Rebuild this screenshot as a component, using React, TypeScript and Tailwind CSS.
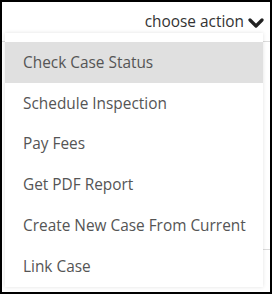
import React from 'react';

const ACTIONS = [
  'Check Case Status',
  'Schedule Inspection',
  'Pay Fees',
  'Get PDF Report',
  'Create New Case From Current',
  'Link Case',
];

const Chevron: React.FC = () => (
  <svg width="16" height="11" viewBox="0 0 16 11" className="ml-[4px] mt-[3px]">
    <polyline
      points="2,2 8,8 14,2"
      fill="none"
      stroke="#222"
      strokeWidth="3.2"
      strokeLinecap="round"
      strokeLinejoin="round"
    />
  </svg>
);

export default function App() {
  return (
    <div
      className="relative w-[272px] h-[294px] overflow-hidden border-2 border-black bg-white"
      style={{ fontFamily: '"Open Sans", "Noto Sans", sans-serif' }}
    >
      {/* page behind the menu */}
      <div className="h-[40px] border-b border-[#dcdcdc] flex items-center justify-end pr-[6px]">
        <span className="text-[15.4px] text-[#333] leading-none">choose action</span>
        <Chevron />
      </div>
      <div className="h-[207px]" />
      <div className="ml-auto w-[120px] border-b border-[#dcdcdc]" />

      {/* dropdown menu */}
      <div className="absolute left-[3px] top-[31px] w-[258px] bg-white pt-[9px] shadow-[0_0_4px_rgba(0,0,0,0.12)]">
        {ACTIONS.map((label, i) => (
          <div
            key={label}
            className={`h-[40.8px] flex items-center pl-[18px] text-[15.4px] text-[#555] ${
              i === 0 ? 'bg-[#e0e0e0]' : ''
            }`}
          >
            {label}
          </div>
        ))}
      </div>
    </div>
  );
}
